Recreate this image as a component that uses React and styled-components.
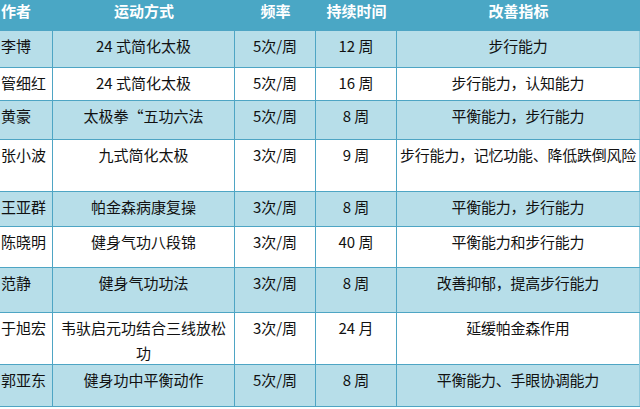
import React from 'react';
import styled, { createGlobalStyle } from 'styled-components';

const GlobalStyle = createGlobalStyle`
  html, body {
    margin: 0;
    padding: 0;
    background: #fff;
  }
`;

const Table = styled.div`
  width: 640px;
  font-family: 'Noto Sans CJK SC', 'Noto Sans', sans-serif;
  font-size: 15px;
  color: #111;
  border-bottom: 2px solid #fff;
`;

const Row = styled.div`
  display: grid;
  grid-template-columns: 53px 182px 81px 81px 1fr;
  height: ${props => props.h}px;
  background: ${props => (props.head ? '#4aa7c5' : props.shade ? '#b7dee9' : '#ffffff')};
  border-bottom: 1px solid #4ea5c4;
  box-sizing: border-box;
`;

const Cell = styled.div`
  box-sizing: border-box;
  border-right: ${props => (props.last ? '1px solid #8fcadd' : '1px solid #4ea5c4')};
  padding-top: 2px;
  padding-left: ${props => (props.left ? '1px' : props.last ? '0' : '5px')};
  padding-right: ${props => (props.last ? '0' : '5px')};
  text-align: ${props => (props.left ? 'left' : 'center')};
  line-height: 25px;
  letter-spacing: ${props => (props.last ? '-0.25px' : '0')};
  white-space: ${props => (props.last ? 'nowrap' : 'normal')};
  overflow: visible;
`;

const HeadCell = styled(Cell)`
  color: #fff;
  font-weight: bold;
  line-height: 22px;
  padding-top: 0;
  letter-spacing: 0;
  border-right: none;
`;

const rows = [
  ['李博', '24 式简化太极', '5次/周', '12 周', '步行能力', 37],
  ['管细红', '24 式简化太极', '5次/周', '16 周', '步行能力，认知能力', 33],
  ['黄豪', '太极拳“五功六法', '5次/周', '8 周', '平衡能力，步行能力', 39],
  ['张小波', '九式简化太极', '3次/周', '9 周', '步行能力，记忆功能、降低跌倒风险', 52],
  ['王亚群', '帕金森病康复操', '3次/周', '8 周', '平衡能力，步行能力', 35],
  ['陈晓明', '健身气功八段锦', '3次/周', '40 周', '平衡能力和步行能力', 41],
  ['范静', '健身气功功法', '3次/周', '8 周', '改善抑郁，提高步行能力', 45],
  ['于旭宏', '韦驮启元功结合三线放松功', '3次/周', '24 月', '延缓帕金森作用', 52],
  ['郭亚东', '健身功中平衡动作', '5次/周', '8 周', '平衡能力、手眼协调能力', 42],
];

export default function App() {
  return (
    <>
      <GlobalStyle />
      <Table>
        <Row head h={31}>
          <HeadCell left>作者</HeadCell>
          <HeadCell>运动方式</HeadCell>
          <HeadCell>频率</HeadCell>
          <HeadCell>持续时间</HeadCell>
          <HeadCell last>改善指标</HeadCell>
        </Row>
        {rows.map((r, i) => (
          <Row key={r[0]} h={r[5]} shade={i % 2 === 0}>
            <Cell left>{r[0]}</Cell>
            <Cell>{r[1]}</Cell>
            <Cell>{r[2]}</Cell>
            <Cell>{r[3]}</Cell>
            <Cell last>{r[4]}</Cell>
          </Row>
        ))}
      </Table>
    </>
  );
}
